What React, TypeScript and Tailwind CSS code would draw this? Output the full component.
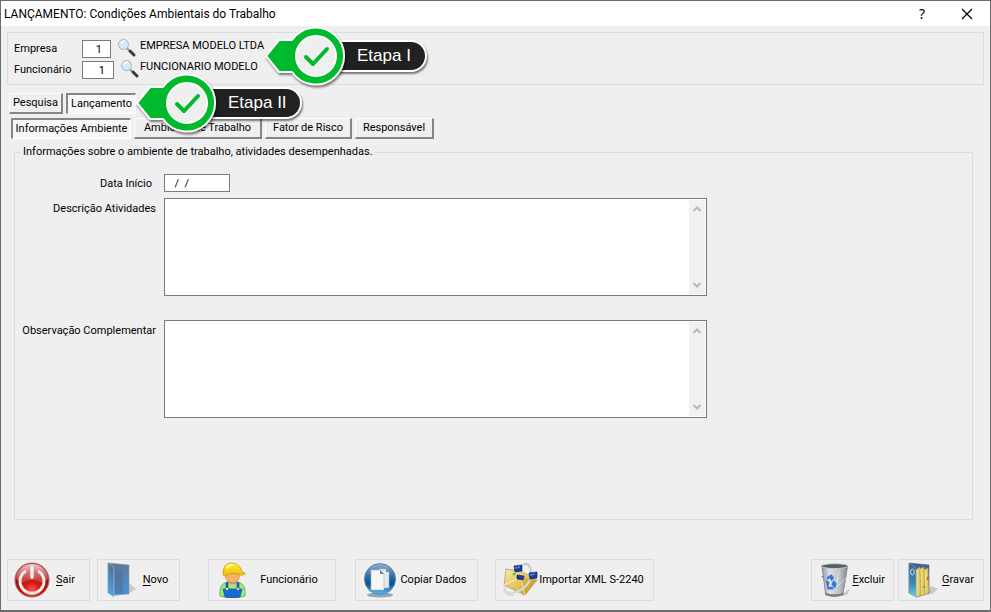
import React, { useState } from "react";
import clsx from "clsx";

const MAIN_TABS = [
  { label: "Pesquisa", width: "w-[54px]" },
  { label: "Lançamento", width: "w-[70px]" },
];

const SUB_TABS = [
  { label: "Informações Ambiente", width: "w-[120px]" },
  { label: "Ambiente de Trabalho", width: "w-[128px]" },
  { label: "Fator de Risco", width: "w-[87px]" },
  { label: "Responsável", width: "w-[79px]" },
];

const PowerIcon = () => (
  <svg viewBox="0 0 36 36" className="w-9 h-9">
    <defs>
      <radialGradient id="power" cx="50%" cy="80%" r="80%">
        <stop offset="0" stopColor="#ff5a4a" />
        <stop offset="0.3" stopColor="#d21a16" />
        <stop offset="0.65" stopColor="#9a0c0e" />
        <stop offset="1" stopColor="#b33a3a" />
      </radialGradient>
      <linearGradient id="powerShine" x1="0" y1="0" x2="0" y2="1">
        <stop offset="0" stopColor="#f4dada" stopOpacity="0.9" />
        <stop offset="1" stopColor="#d66" stopOpacity="0.45" />
      </linearGradient>
    </defs>
    <circle cx="18" cy="18" r="17" fill="url(#power)" stroke="#a66" strokeWidth="1" />
    <path d="M2 17a16 15 0 0 1 32 0q-4 4-8 3-8-4-16 0-4 1-8-3z" fill="url(#powerShine)" />
    <path d="M11 9.500a12 12 0 1 0 14 0" fill="none" stroke="#f0ebeb" strokeWidth="3" strokeLinecap="round" />
    <path d="M18 5v10" stroke="#f0ebeb" strokeWidth="3.600" strokeLinecap="round" />
  </svg>
);

const FolderIcon = () => (
  <svg viewBox="0 0 36 36" className="w-9 h-9">
    <defs>
      <linearGradient id="folder" x1="0" y1="0" x2="0.4" y2="1">
        <stop offset="0" stopColor="#5f7188" />
        <stop offset="0.6" stopColor="#5b82ae" />
        <stop offset="1" stopColor="#4a8fd0" />
      </linearGradient>
      <linearGradient id="folderFlap" x1="0" y1="0" x2="0" y2="1">
        <stop offset="0" stopColor="#51708f" />
        <stop offset="1" stopColor="#4fa3e0" />
      </linearGradient>
    </defs>
    <path d="M11 34l15-12 6 5-6 4z" fill="#bbb" opacity="0.7" />
    <path d="M4 1l21 2v29l-15 1L4 31z" fill="url(#folder)" stroke="#7f95ad" strokeWidth="0.600" />
    <path d="M11 7l8 2v22l-8 1z" fill="#4a6e98" opacity="0.5" />
    <path d="M4 1l6 4v30l-6-4z" fill="url(#folderFlap)" stroke="#8cc0ea" strokeWidth="0.600" />
  </svg>
);

const WorkerIcon = () => (
  <svg viewBox="0 0 36 36" className="w-9 h-9">
    <defs>
      <linearGradient id="helmet" x1="0" y1="0" x2="0" y2="1">
        <stop offset="0" stopColor="#fff03a" />
        <stop offset="1" stopColor="#f2b800" />
      </linearGradient>
    </defs>
    <path d="M5 34c-1-9 2-13 8-14h9c6 1 9 5 8 14-8 2-17 2-25 0z" fill="#9be87c" stroke="#4fae3f" strokeWidth="0.800" />
    <path d="M11 21v6H8l2 8c5 1 10 1 15 0l2-8h-3v-6l-2-1v7h-9v-7z" fill="#1769d6" stroke="#0b46a3" strokeWidth="0.600" />
    <circle cx="12" cy="27" r="1.200" fill="#ffe14a" />
    <circle cx="23" cy="27" r="1.200" fill="#ffe14a" />
    <path d="M13 17h9v3q-4 5-9 0z" fill="#e78a3c" />
    <ellipse cx="17.500" cy="14" rx="7" ry="7" fill="#f9b06c" stroke="#d9803a" strokeWidth="0.600" />
    <path d="M8 12C8 5 11 1 16 1s10 3 11 9l3 1c0 2-2 2-4 2-6-2-12-2-16 1-1 0-2-1-2-2z" fill="url(#helmet)" stroke="#c79a00" strokeWidth="0.800" />
    <path d="M12 6q2-3 6-3" fill="none" stroke="#fffbb0" strokeWidth="1.500" strokeLinecap="round" />
  </svg>
);

const CopyIcon = () => (
  <svg viewBox="0 0 36 36" className="w-9 h-9">
    <defs>
      <linearGradient id="ball" x1="0" y1="0" x2="0" y2="1">
        <stop offset="0" stopColor="#8fb2cf" />
        <stop offset="0.45" stopColor="#2868a4" />
        <stop offset="0.65" stopColor="#0f4e8c" />
        <stop offset="1" stopColor="#55c4f0" />
      </linearGradient>
    </defs>
    <ellipse cx="18" cy="33" rx="13" ry="2.500" fill="#477a9b" opacity="0.6" />
    <circle cx="18" cy="17" r="15.500" fill="url(#ball)" stroke="#4d7ea9" strokeWidth="0.800" />
    <path d="M17 7h7l3 3v16H17z" fill="#e4eaee" stroke="#9db0c0" strokeWidth="0.600" />
    <path d="M9 8h9l4 4v16H9z" fill="#f6f6f6" stroke="#a9b7c2" strokeWidth="0.600" />
    <path d="M18 8v4h4zM24 7v3h3z" fill="#78858f" />
  </svg>
);

const ImportIcon = () => (
  <svg viewBox="0 0 36 36" className="w-9 h-9">
    <defs>
      <linearGradient id="envelope" x1="0" y1="0" x2="1" y2="1">
        <stop offset="0" stopColor="#f6e9a6" />
        <stop offset="0.6" stopColor="#dfbf55" />
        <stop offset="1" stopColor="#b98c20" />
      </linearGradient>
    </defs>
    <path d="M21 3c5-4 9 3 8 13-1 9-5 15-9 17" fill="none" stroke="#c6cdd2" strokeWidth="2.200" />
    <path d="M4 7l15 2 16 9-12 15L2 23z" fill="url(#envelope)" stroke="#a88b3a" strokeWidth="0.600" />
    <path d="M2 23l17-8 4 18" fill="none" stroke="#fff4bf" strokeWidth="1" />
    <path d="M19 15l4 18 12-15z" fill="#c79e34" opacity="0.5" />
    <path d="M2 28c5 6 20 2 26-10M4 25c-4 4 0 9 8 8" fill="none" stroke="#d5dadd" strokeWidth="2" />
    <path d="M12 4l8-1v6l-7 1zM27 11l8-1v6l-7 1zM15 13l7 1-1 4-6-1z" fill="#153b9e" stroke="#0a1f5c" strokeWidth="0.600" />
    <path d="M13 5l5-1v2l-5 1zM28 12l5-1v2l-5 1z" fill="#4a78d8" />
    <circle cx="12" cy="12" r="1.300" fill="#35c135" />
  </svg>
);

const TrashIcon = () => (
  <svg viewBox="0 0 36 36" className="w-9 h-9">
    <defs>
      <linearGradient id="bin" x1="0" y1="0" x2="1" y2="0">
        <stop offset="0" stopColor="#8e969c" />
        <stop offset="0.3" stopColor="#dde1e4" />
        <stop offset="0.7" stopColor="#b9c0c5" />
        <stop offset="1" stopColor="#7f878c" />
      </linearGradient>
    </defs>
    <path d="M25 34l8-7-2 6-5 2z" fill="#aaa" opacity="0.6" />
    <path d="M4 3l4 30q9 4 18 0l5-30z" fill="url(#bin)" stroke="#7b8287" strokeWidth="0.800" />
    <path d="M7 31q10 4 20 0l-1 3q-9 3-18 0z" fill="#777d80" />
    <ellipse cx="17.500" cy="3.500" rx="14" ry="2.500" fill="#565c60" stroke="#c5cacd" strokeWidth="1" />
    <path d="M9 15l5-3 3 4-3 3-2-3-2 2zM8 18l4 2-1 5h5v3H10zM16 18l4 4-2 5-4-4z" fill="#3b77d8" />
    <path d="M20 25l9-9M22 9l-3 18" stroke="#eef1f2" strokeWidth="1" opacity="0.7" />
    <path d="M4 14h1v1H4z" fill="#222" />
  </svg>
);

const SaveIcon = () => (
  <svg viewBox="0 0 36 36" className="w-9 h-9">
    <defs>
      <linearGradient id="binder" x1="0" y1="0" x2="0" y2="1">
        <stop offset="0" stopColor="#3f5f86" />
        <stop offset="0.6" stopColor="#3e86b4" />
        <stop offset="1" stopColor="#62d4e4" />
      </linearGradient>
      <linearGradient id="pages" x1="0" y1="0" x2="1" y2="0">
        <stop offset="0" stopColor="#f7eb9f" />
        <stop offset="1" stopColor="#d8b33f" />
      </linearGradient>
    </defs>
    <path d="M16 34l10-10 7 3-6 5z" fill="#bbb" opacity="0.7" />
    <path d="M4 1l20 2v28l-12 4-8-4z" fill="url(#binder)" stroke="#4a6480" strokeWidth="0.600" />
    <path d="M11 8l4-3 1 28-5 2z" fill="url(#pages)" stroke="#b99a3a" strokeWidth="0.500" />
    <path d="M15 7l4-2 1 27-4 2z" fill="url(#pages)" stroke="#b99a3a" strokeWidth="0.500" />
    <path d="M19 8l4-2 1 24-4 3z" fill="url(#pages)" stroke="#b99a3a" strokeWidth="0.500" />
    <path d="M4 1l7 5v29l-7-4z" fill="url(#binder)" stroke="#7fa9c8" strokeWidth="0.600" />
    <ellipse cx="7.500" cy="10" rx="1.800" ry="3" fill="none" stroke="#c5dced" strokeWidth="1" />
    <path d="M22 15h2v3h-2z" fill="#e0532f" />
    <path d="M18 24h2v2h-2z" fill="#4db54d" />
  </svg>
);

const LensIcon = () => (
  <svg viewBox="0 0 20 20" className="w-5 h-5">
    <path d="M10 9.500l6 5.500" stroke="#9a9a9a" strokeWidth="2" />
    <path d="M13 12l4 4" stroke="#3a3a3a" strokeWidth="3" strokeLinecap="round" />
    <circle cx="6.500" cy="5.500" r="5" fill="#d3ebf9" stroke="#a9b3ba" strokeWidth="1" />
    <path d="M4 5q1-3 4-3" stroke="#fff" strokeWidth="1.500" fill="none" />
  </svg>
);

type CalloutProps = { label: string; className: string; pill: string };

const Callout = ({ label, className, pill }: CalloutProps) => (
  <div className={clsx("absolute z-20 flex items-center pointer-events-none", className)}>
    <svg viewBox="0 0 82 62" className="relative z-10 w-[82px] h-[62px] drop-shadow-[1px_2px_1px_rgba(0,0,0,0.5)]">
      <path
        d="M1 31L14 15H27A28.500 28.500 0 1 1 27 47H14z"
        fill="#00b92d"
        stroke="#fff"
        strokeWidth="2"
        strokeLinejoin="round"
      />
      <circle cx="51" cy="31" r="20" fill="#efefef" stroke="#fff" strokeWidth="2" />
      <path d="M41 32l7 7 14-15" fill="none" stroke="#00b92d" strokeWidth="4" strokeLinecap="round" strokeLinejoin="round" />
    </svg>
    <span
      className={clsx(
        "-ml-3 h-8 pl-5 flex items-center rounded-r-full border-2 border-white bg-[#212121] text-white text-[17px] font-['Liberation_Sans',sans-serif] whitespace-nowrap shadow-[1px_2px_2px_rgba(0,0,0,0.5)]",
        pill
      )}
    >
      {label}
    </span>
  </div>
);

type TabRowProps = {
  tabs: { label: string; width: string }[];
  active: number;
  onSelect: (index: number) => void;
};

const TabRow = ({ tabs, active, onSelect }: TabRowProps) => (
  <div role="tablist" className="flex gap-[3px]">
    {tabs.map((tab, index) => (
      <button
        key={tab.label}
        role="tab"
        aria-selected={index === active}
        onClick={() => onSelect(index)}
        className={clsx(
          "h-[21px] shrink-0 whitespace-nowrap flex items-center justify-center",
          tab.width,
          index === active
            ? "border-t-2 border-l-2 border-r border-b border-t-[#858585] border-l-[#858585] border-r-white border-b-white bg-[#f7f7f7]"
            : "border-t border-l border-r-2 border-b-2 border-t-white border-l-white border-r-[#858585] border-b-[#858585] bg-[#efefef]"
        )}
      >
        {tab.label}
      </button>
    ))}
  </div>
);

type MemoProps = { id: string; label: string };

const Memo = ({ id, label }: MemoProps) => (
  <>
    <label htmlFor={id} className="pt-1 text-right leading-[14px]">
      {label}
    </label>
    <div className="flex w-full max-w-[543px] h-[98px] bg-white border border-[#7a7a7a] p-px">
      <textarea id={id} className="flex-1 min-w-0 resize-none overflow-hidden p-1 outline-none" />
      <div className="w-4 bg-[#f0f0f0] flex flex-col justify-between items-center py-1.5" aria-hidden="true">
        <svg viewBox="0 0 8 6" className="w-2 h-1.5">
          <path d="M0.500 5L4 1.500 7.500 5" fill="none" stroke="#b8b8b8" strokeWidth="2" />
        </svg>
        <svg viewBox="0 0 8 6" className="w-2 h-1.5">
          <path d="M0.500 1L4 4.500 7.500 1" fill="none" stroke="#b8b8b8" strokeWidth="2" />
        </svg>
      </div>
    </div>
  </>
);

type ActionProps = { icon: React.ReactNode; label: string; hotkey?: boolean; className: string };

const Action = ({ icon, label, hotkey, className }: ActionProps) => (
  <button className={clsx("h-[42px] shrink-0 flex items-center border border-[#dcdcdc] pl-1.5 pr-2", className)}>
    {icon}
    <span className="flex-1 text-center whitespace-nowrap">
      {hotkey ? (
        <>
          <span className="underline underline-offset-2">{label[0]}</span>
          {label.slice(1)}
        </>
      ) : (
        label
      )}
    </span>
  </button>
);

const App = () => {
  const [mainTab, setMainTab] = useState(1);
  const [subTab, setSubTab] = useState(0);
  const [company, setCompany] = useState("1");
  const [employee, setEmployee] = useState("1");
  const [startDate, setStartDate] = useState("  /  /");

  return (
    <div className="min-h-screen flex flex-col bg-[#efefef] border border-b-2 border-[#6b6b6d] text-black text-[11px] font-['Roboto',sans-serif]">
      {/* Title bar */}
      <header className="h-[25px] bg-white flex items-center justify-between pl-[3px] pr-[17px]">
        <h1 className="text-xs">LANÇAMENTO: Condições Ambientais do Trabalho</h1>
        <div className="flex items-center gap-9">
          <button aria-label="Ajuda" className="text-sm font-['Noto_Sans',sans-serif]">?</button>
          <button aria-label="Fechar">
            <svg viewBox="0 0 12 12" className="w-3 h-3">
              <path d="M1 1l10 10M11 1L1 11" stroke="#000" strokeWidth="1.200" />
            </svg>
          </button>
        </div>
      </header>

      {/* Company and employee */}
      <section className="relative mx-1.5 mt-1.5 h-[53px] border border-[#dcdcdc] pt-1.5 pl-1.5 flex flex-col gap-[3px]">
        <div className="grid grid-cols-[68px_58px_auto] h-[18px] items-center">
          <label htmlFor="empresa">Empresa</label>
          <div className="flex items-center gap-1.5">
            <input
              id="empresa"
              value={company}
              onChange={(e) => setCompany(e.target.value)}
              className="w-[29px] h-[18px] bg-white border border-[#7a7a7a] text-right pr-2 outline-none"
            />
            <button aria-label="Pesquisar empresa"><LensIcon /></button>
          </div>
          <span className="self-start leading-[14px]">EMPRESA MODELO LTDA</span>
        </div>
        <div className="grid grid-cols-[68px_58px_auto] h-[18px] items-center">
          <label htmlFor="funcionario">Funcionário</label>
          <div className="flex items-center gap-1.5">
            <input
              id="funcionario"
              value={employee}
              onChange={(e) => setEmployee(e.target.value)}
              className="w-8 h-[18px] shrink-0 bg-white border border-[#7a7a7a] text-right pr-2 outline-none"
            />
            <button aria-label="Pesquisar funcionário"><LensIcon /></button>
          </div>
          <span className="self-start leading-[14px]">FUNCIONARIO MODELO</span>
        </div>
        <Callout label="Etapa I" className="left-[257px] -top-2" pill="w-[92px]" />
      </section>

      {/* Tabs */}
      <nav className="relative mt-2 pl-2">
        <TabRow tabs={MAIN_TABS} active={mainTab} onSelect={setMainTab} />
        <div className="mt-1 pl-0.5">
          <TabRow tabs={SUB_TABS} active={subTab} onSelect={setSubTab} />
        </div>
        <Callout label="Etapa II" className="left-[135px] -top-[21px]" pill="w-[96px]" />
      </nav>

      <fieldset className="flex-1 mt-1.5 ml-[13px] mr-[17px] border border-[#dcdcdc] pb-6">
        <legend className="ml-1.5 px-0.5 leading-[14px]">
          Informações sobre o ambiente de trabalho, atividades desempenhadas.
        </legend>
        <div className="grid grid-cols-[141px_1fr] gap-x-2 mt-[15px]">
          <label htmlFor="inicio" className="pr-1 pt-[3px] text-right leading-[14px]">Data Início</label>
          <input
            id="inicio"
            value={startDate}
            onChange={(e) => setStartDate(e.target.value)}
            className="w-[66px] h-[18px] mb-1.5 bg-white border border-[#7a7a7a] px-1 outline-none"
          />
          <Memo id="descricao" label="Descrição Atividades" />
          <div className="col-span-2 h-6" />
          <Memo id="observacao" label="Observação Complementar" />
        </div>
      </fieldset>

      {/* Actions */}
      <footer className="mt-[39px] mb-[9px] px-1.5 flex">
        <Action icon={<PowerIcon />} label="Sair" hotkey className="w-[83px]" />
        <Action icon={<FolderIcon />} label="Novo" hotkey className="ml-[7px] w-[83px]" />
        <Action icon={<WorkerIcon />} label="Funcionário" className="ml-7 w-32" />
        <Action icon={<CopyIcon />} label="Copiar Dados" className="ml-[19px] w-[123px]" />
        <Action icon={<ImportIcon />} label="Importar XML S-2240" className="ml-[17px] w-[159px]" />
        <Action icon={<TrashIcon />} label="Excluir" hotkey className="ml-auto w-[83px]" />
        <Action icon={<SaveIcon />} label="Gravar" hotkey className="ml-1 w-[86px]" />
      </footer>
    </div>
  );
};

export default App;
